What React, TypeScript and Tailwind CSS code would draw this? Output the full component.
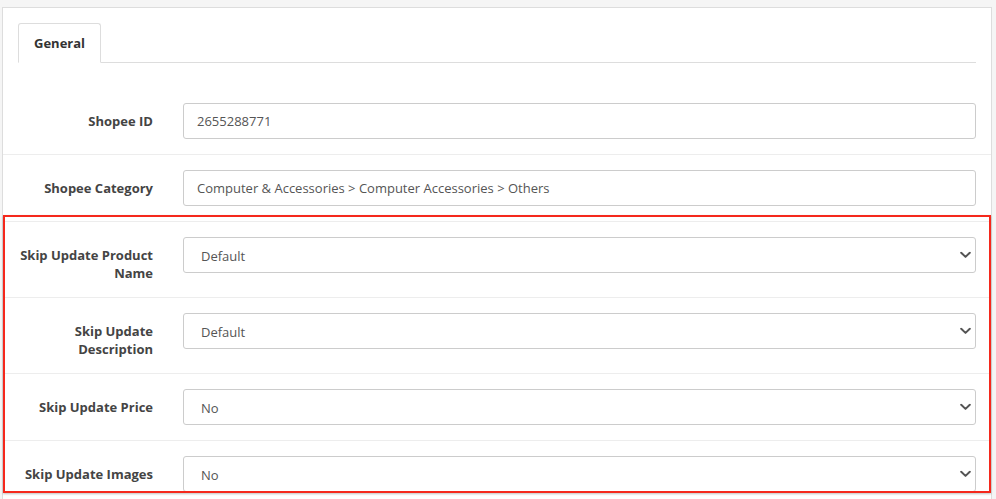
import React from 'react';

interface FieldRow {
  label: React.ReactNode;
  value: string;
  kind: 'input' | 'select';
}

const rows: FieldRow[] = [
  { label: 'Shopee ID', value: '2655288771', kind: 'input' },
  { label: 'Shopee Category', value: 'Computer & Accessories > Computer Accessories > Others', kind: 'input' },
  { label: <>Skip Update Product<br />Name</>, value: 'Default', kind: 'select' },
  { label: <>Skip Update<br />Description</>, value: 'Default', kind: 'select' },
  { label: 'Skip Update Price', value: 'No', kind: 'select' },
  { label: 'Skip Update Images', value: 'No', kind: 'select' },
];

const Chevron = () => (
  <svg
    className="pointer-events-none absolute right-[4px] top-1/2 -translate-y-1/2"
    width="11"
    height="7"
    viewBox="0 0 11 7"
    fill="none"
  >
    <path d="M1.2 1.2 L5.5 5.4 L9.8 1.2" stroke="#555" strokeWidth="2" strokeLinecap="round" strokeLinejoin="round" />
  </svg>
);

const App: React.FC = () => {
  return (
    <div className="relative w-[996px] h-[499px] overflow-hidden bg-[#f5f5f5] font-['Open_Sans',sans-serif]">
      <div className="ml-[2px] mr-[4px] mt-[7px] h-full bg-white border-x border-t border-[#dddddd]">
        <div className="px-[15px] pt-[15px]">
          {/* Tabs */}
          <div className="flex border-b border-[#dddddd]">
            <div className="-mb-px px-[15px] py-[10px] bg-white border border-[#dddddd] border-b-white rounded-t-[3px] text-[13px] leading-[18px] font-bold text-[#333]">
              General
            </div>
          </div>

          {/* Form rows */}
          <div className="mt-[25px] -mx-[15px]">
            {rows.map((row, i) => (
              <div
                key={i}
                className={`flex py-[15px] ${i > 0 ? 'border-t border-[#ededed]' : ''}`}
              >
                <div className="w-[165px] shrink-0 px-[15px] pt-[9px] text-right text-[13px] leading-[18px] font-bold text-[#444]">
                  {row.label}
                </div>
                <div className="flex-1 px-[15px]">
                  {row.kind === 'input' ? (
                    <div className="h-[36px] flex items-center pt-[1px] px-[13px] border border-[#cccccc] rounded-[3px] bg-white text-[13px] text-[#555]">
                      {row.value}
                    </div>
                  ) : (
                    <div className="relative h-[36px] flex items-center pt-[3px] px-[17px] border border-[#cccccc] rounded-[3px] bg-white text-[13px] text-[#555]">
                      {row.value}
                      <Chevron />
                    </div>
                  )}
                </div>
              </div>
            ))}
          </div>
        </div>
      </div>

      {/* Annotation highlight */}
      <div className="absolute left-[3px] top-[215px] w-[988px] h-[278px] border-2 border-[#f5281c] shadow-[0_1px_2px_rgba(0,0,0,0.25)] pointer-events-none" />
    </div>
  );
};

export default App;
